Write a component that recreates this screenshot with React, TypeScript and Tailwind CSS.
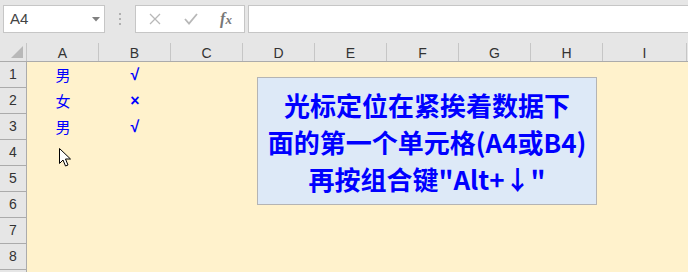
import React from "react";

const cols = [
  { label: "A", w: "w-[72px]" },
  { label: "B", w: "w-[72px]" },
  { label: "C", w: "w-[72px]" },
  { label: "D", w: "w-[72px]" },
  { label: "E", w: "w-[72px]" },
  { label: "F", w: "w-[72px]" },
  { label: "G", w: "w-[72px]" },
  { label: "H", w: "w-[72px]" },
  { label: "I", w: "w-[84px]" },
];

// cell values for columns A and B
const data: Record<number, [string, string]> = {
  1: ["男", "√"],
  2: ["女", "×"],
  3: ["男", "√"],
};

const rows = [1, 2, 3, 4, 5, 6, 7, 8];

export default function App() {
  return (
    <div
      className="relative w-[688px] h-[272px] overflow-hidden bg-[#e6e6e6]"
      style={{ fontFamily: '"Liberation Sans", "Noto Sans CJK SC", sans-serif' }}
    >
      {/* formula bar */}
      <div className="flex h-[43px] items-start pt-[5px]">
        <div className="ml-[3px] flex h-[28px] w-[102px] items-center justify-between border border-[#c6c6c6] bg-white pl-[6px] pr-[4px]">
          <span className="text-[15px] text-[#444]">A4</span>
          <svg width="8" height="5" viewBox="0 0 8 5">
            <path d="M0 0h8L4 4.5z" fill="#808080" />
          </svg>
        </div>
        <div className="flex h-[28px] w-[30px] flex-col items-center justify-center gap-[3px]">
          <div className="h-[2px] w-[2px] bg-[#b0b0b0]" />
          <div className="h-[2px] w-[2px] bg-[#b0b0b0]" />
          <div className="h-[2px] w-[2px] bg-[#b0b0b0]" />
        </div>
        <div className="flex h-[28px] w-[110px] items-center border border-[#c6c6c6] bg-white">
          <div className="flex w-[38px] justify-center">
            <svg width="12" height="12" viewBox="0 0 12 12">
              <path d="M1 1l10 10M11 1L1 11" stroke="#b8b8b8" strokeWidth="1.3" />
            </svg>
          </div>
          <div className="flex w-[34px] justify-center">
            <svg width="14" height="12" viewBox="0 0 14 12">
              <path d="M1 6l4 4.5L13 1" stroke="#b8b8b8" strokeWidth="1.8" fill="none" />
            </svg>
          </div>
          <div
            className="flex w-[36px] justify-center text-[16px] italic text-[#777]"
            style={{ fontFamily: '"Liberation Serif", serif' }}
          >
            <span className="font-bold">f</span>
            <span className="text-[13px] mt-[3px] font-bold">x</span>
          </div>
        </div>
        <div className="ml-[3px] h-[28px] flex-1 border border-r-0 border-[#c6c6c6] bg-white" />
      </div>

      {/* column headers */}
      <div className="flex h-[19px] border-b border-[#ababab]">
        <div className="relative w-[27px] border-r border-[#c6c6c6]">
          <svg className="absolute left-[11px] top-[3px]" width="12" height="12" viewBox="0 0 12 12">
            <path d="M12 0v12H0z" fill="#b8b8b8" />
          </svg>
        </div>
        {cols.map((c) => (
          <div
            key={c.label}
            className={`${c.w} flex items-end justify-center border-r border-[#c6c6c6] pb-[1px] text-[14px] leading-none text-[#333]`}
          >
            {c.label}
          </div>
        ))}
      </div>

      {/* rows */}
      {rows.map((r) => (
        <div key={r} className="flex h-[26px]">
          <div className="flex w-[27px] items-center justify-center border-r border-b border-[#ababab] text-[14px] text-[#333]">
            {r}
          </div>
          <div className="flex flex-1 bg-[#fff2cc]">
            <div
              className="flex w-[72px] items-center justify-center text-[15px] text-[#0000ff]"
              style={{ fontFamily: '"Noto Sans CJK SC", sans-serif' }}
            >
              {data[r]?.[0]}
            </div>
            <div className="flex w-[72px] items-center justify-center text-[16px] font-bold text-[#0000ff]">
              {data[r]?.[1]}
            </div>
          </div>
        </div>
      ))}
      {/* partially visible row 9 */}
      <div className="flex h-[26px]">
        <div className="w-[27px] border-r border-[#ababab]" />
        <div className="flex-1 bg-[#fff2cc]" />
      </div>

      {/* text box shape */}
      <div
        className="absolute left-[257px] top-[77px] flex h-[128px] w-[340px] flex-col items-center justify-center border border-[#b4b4b4] bg-[#dde9f7] text-center text-[26px] font-bold leading-[37px] text-[#0000ff]"
        style={{ fontFamily: '"Noto Sans CJK SC", sans-serif' }}
      >
        <div>光标定位在紧挨着数据下</div>
        <div>面的第一个单元格(A4或B4)</div>
        <div>再按组合键"Alt+↓"</div>
      </div>

      {/* mouse cursor */}
      <svg className="absolute left-[59px] top-[148px]" width="13" height="20" viewBox="0 0 13 20">
        <path
          d="M0.5 0.5v15l3.5-3.5 2.5 6 2.5-1-2.5-6h5z"
          fill="white"
          stroke="black"
          strokeWidth="1"
          strokeLinejoin="round"
        />
      </svg>
    </div>
  );
}
